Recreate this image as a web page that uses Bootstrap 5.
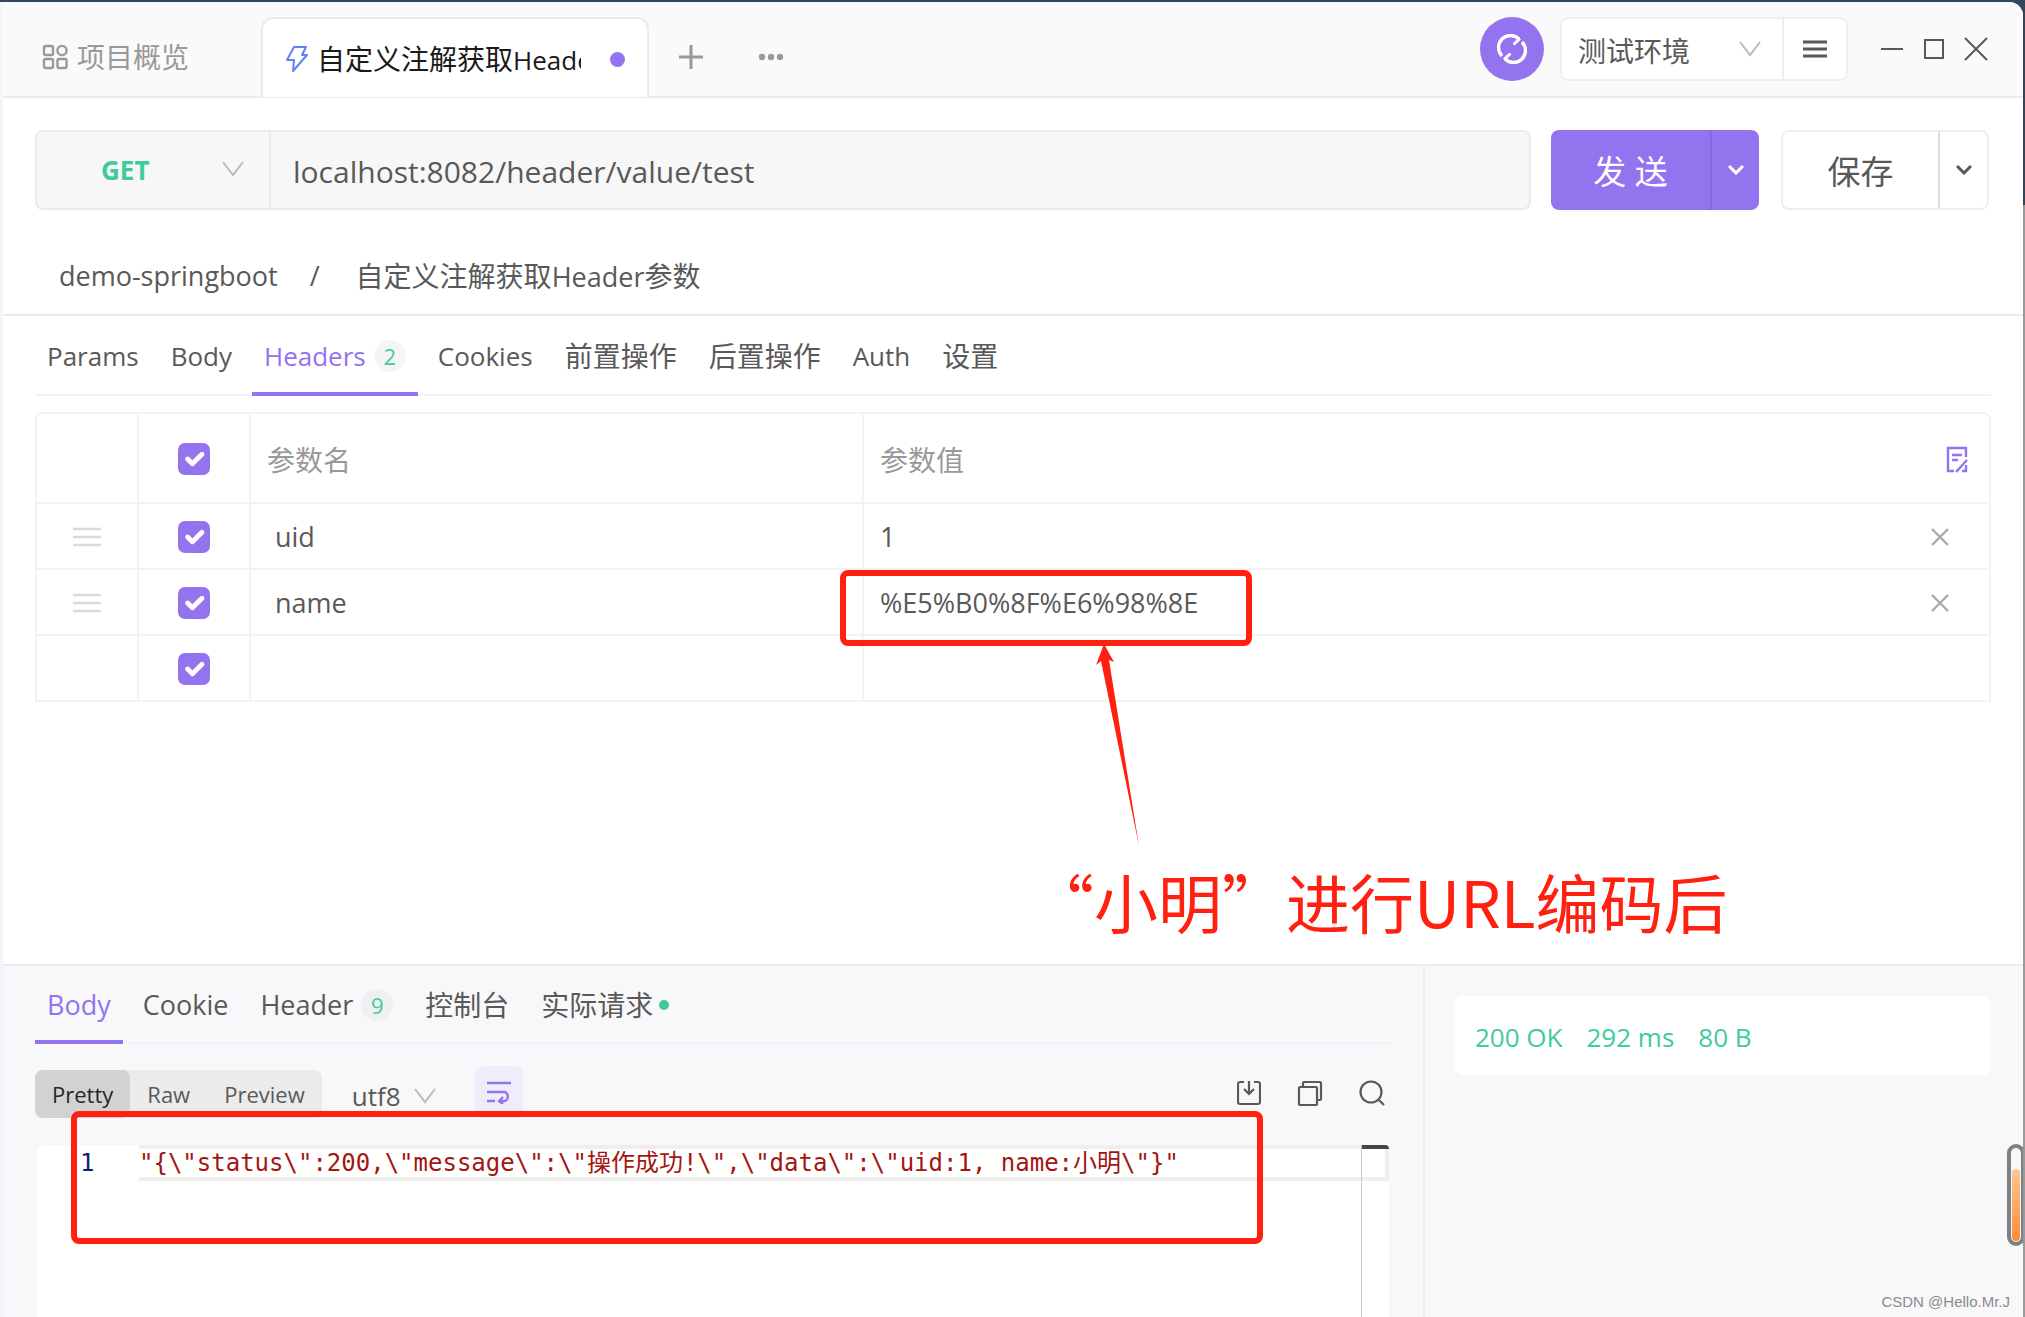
<!DOCTYPE html>
<html lang="zh-CN">
<head>
<meta charset="utf-8">
<meta name="viewport" content="width=device-width, initial-scale=1">
<title>自定义注解获取Header参数</title>
<link href="https://cdn.jsdelivr.net/npm/bootstrap@5.3.0/dist/css/bootstrap.min.css" rel="stylesheet">
<style>
:root{--violet:#9373ee;--mint:#3fcb9c;--ink:#595959;--line:#e8ebf0;--soft:#f3f3f5;--red:#ff2010}
body{font-family:"Open Sans","Noto Sans CJK SC",sans-serif;font-size:26px;line-height:36px;color:var(--ink);background:linear-gradient(#34465a 0 205px,#999 205px)}
button,input,select{font-family:inherit;color:inherit}
button{background:none;border:0;padding:0}
svg{display:block;flex:none;fill:none;stroke:currentColor}
.zh{font-size:28px}
.app-window{margin:2px 2px 0 0;min-height:calc(100vh - 2px);background:#fff;border-left:3px solid #f2f5f9;border-top-right-radius:14px;overflow:hidden;position:relative}
.title-bar{height:96px;background:#fafafa;border-bottom:2px solid var(--line);padding-right:35px}
.tab-strip{padding-top:16px;height:96px}
.overview-tab{width:258px;padding-left:39px;gap:9px;color:#999}
.open-tab{width:388px;height:80px;background:#fff;border:2px solid var(--line);border-bottom:0;border-radius:12px 12px 0 0;padding:2px 22px 0 22px;color:#1a1a1a}
.open-tab .tab-title{width:264px;margin-left:8px;overflow:hidden;white-space:nowrap}
.bolt-icon{color:#5b85ee}
.unsaved-dot{width:15px;height:15px;border-radius:50%;background:var(--violet)}
.sync-btn{width:64px;height:64px;border-radius:50%;background:var(--violet);color:#fff}
.boxed{border:2px solid #eee;border-radius:8px;background:#fff}
.env-box{height:64px;width:288px}
.pick{appearance:none;border:0;outline:0;background:url("data:image/svg+xml,%3Csvg xmlns='http://www.w3.org/2000/svg' width='22' height='16' fill='none' stroke='%23bbb' stroke-width='2'%3E%3Cpath d='M1 1l10 13L21 1'/%3E%3C/svg%3E") no-repeat}
.env-select{width:222px;padding-left:16px;padding-top:3px;font-size:28px;background-position:right 21px center;border-right:2px solid #eee}
.window-btns{gap:20px;margin-left:32px}
.request-bar{padding:32px 34px 0 32px}
.url-box{height:80px;background:#f7f7f7;border:2px solid var(--line);border-radius:8px;margin-right:20px}
.method-select{width:234px;padding-left:64px;font-weight:700;font-size:26px;color:var(--mint);background-position:right 25px top 29px;border-right:2px solid var(--line)}
.url-input{border:0;background:none;padding:3px 22px 0;font-size:30px;min-width:0;outline:0}
.split-btn{height:80px;width:208px;font-size:33px;border-radius:8px;overflow:hidden}
.split-btn>button:first-child{padding-top:4px}
.send-btn{background:var(--violet);color:#fff;margin-right:22px}
.send-btn .drop{border-left:2px solid #8868e0}
.save-btn .drop{border-left:2px solid #ddd}
.split-btn .drop{width:49px}
.crumbs{padding:28px 56px 0;height:106px;font-size:27px;border-bottom:2px solid var(--line)}
.crumbs a{color:inherit;text-decoration:none}
.crumb-slash{margin:0 36px 0 32px}
.tab-row{margin:0 32px;border-bottom:2px solid #f0f3f8;gap:8px;height:80px;flex-wrap:nowrap}
.tab-row .nav-link{padding:4px 12px 0;height:80px;color:var(--ink);border-bottom:4px solid transparent;display:flex;align-items:center;white-space:nowrap}
.tab-row .nav-link.active{color:var(--violet);border-color:var(--violet)}
.count-pill{width:32px;height:32px;line-height:32px;border-radius:50%;background:#f5f5f5;color:var(--mint);font-size:22px;text-align:center;margin-left:8px}
.param-grid{margin:16px 32px 0;border:2px solid var(--soft);border-radius:8px 8px 0 0}
.param-grid table{table-layout:fixed;width:100%;border-collapse:separate;border-spacing:0}
.param-grid td,.param-grid th{height:66px;padding:0;border-bottom:2px solid var(--soft);font-weight:400;position:relative}
.param-grid th{height:90px;color:#999;font-size:28px;padding:3px 0 0 16px}
.param-grid tr>:nth-child(-n+3){border-right:2px solid var(--soft)}
.param-grid tr>:nth-child(-n+2){padding:2px 0 0}
.param-grid tr:last-child td{height:64px;border-bottom:0}
.param-grid .form-check-input{width:32px;height:32px;margin:0;border:0;border-radius:7px;display:block;margin:auto}
.param-grid .form-check-input:checked{background-color:var(--violet)}
.cell-input{border:0;background:none;outline:0;width:80%;padding:2px 0 0 24px;font-size:27px}
.value-input{padding-left:16px}
.row-icon{color:#dadada;margin:auto}
.edit-btn{display:block;margin-left:38px;color:var(--violet)}
.delete-btn{display:block;margin:2px 0 0 40px;color:#aaa}
.ring{position:absolute;border:6px solid var(--red);border-radius:8px;pointer-events:none;z-index:2}
.value-ring{left:-24px;top:0;width:412px;height:76px}
.pointer{position:absolute;left:228px;top:74px;z-index:2}
.pointer path{fill:var(--red);stroke:none}
.note{font-family:"Noto Sans CJK SC",sans-serif;font-size:64px;line-height:80px;color:var(--red);padding:158px 0 24px;margin-left:calc(50% + 17px);white-space:nowrap}
.response{background:#f8f8fb;border-top:2px solid var(--line);height:353px}
.response-main{border-right:2px solid var(--line);min-width:0;position:relative}
.response-side{width:598px;padding:30px 32px 30px 30px}
.response .tab-row{height:78px;border-color:#eff3f7;gap:8px}
.response .tab-row .nav-link{height:78px;padding-top:3px}
.response .tab-row .latin{font-size:27px}
.response .count-pill{background:#f0f0f3}
.live-dot{width:10px;height:10px;border-radius:50%;background:var(--mint);margin-left:6px}
.view-bar{height:74px;padding:0 38px 0 32px}
.view-switch{background:#ebebeb;border-radius:8px;height:48px;font-size:22px}
.view-switch button{padding:0 17px;height:48px;border-radius:8px}
.view-switch .on{background:#d2d2d2;color:#262626}
.charset{width:86px;margin-left:30px;background-position:right 2px center;padding:0}
.wrap-btn{width:48px;height:52px;border-radius:8px;background:#f0edfa;color:var(--violet);margin-left:37px}
.tools{gap:36px}
.editor{margin:27px 34px 0 34px;height:172px;background:#fffffe;border-top-left-radius:8px;border-top-right-radius:8px;font-family:"DejaVu Sans Mono","Noto Sans CJK SC",monospace;font-size:24px;line-height:28px;overflow:hidden}
.line-no{width:102px;padding:4px 0 0 43px;color:#0b216f}
.code-line{border:4px solid #eee;border-left:0;height:36px;color:#a31515;white-space:pre}
.overview-ruler{position:absolute;right:34px;top:179px;width:28px;height:172px;border-left:1px solid #ccc;pointer-events:none}
.overview-ruler::before{content:"";display:block;height:4px;background:#444;border-top-right-radius:6px}
.body-ring{left:68px;top:145px;right:160px;height:133px}
.stat-card{background:#fff;border-radius:8px;height:79px;padding:2px 20px 0;gap:24px;color:var(--mint)}
.charge{position:absolute;right:-2px;bottom:71px;width:18px;height:102px;border:4px solid #808080;border-radius:9px;background:#f8f8fb;padding:21px 1px 1px}
.charge div{height:100%;border-radius:4px;background:linear-gradient(#ffc890,#ff8a3c)}
.credit{position:absolute;right:13px;bottom:5px;font-family:"Liberation Sans",sans-serif;font-size:15px;line-height:20px;color:#8a8a8a}
</style>
</head>
<body>
<div class="app-window">
  <header class="title-bar d-flex align-items-center">
    <div class="tab-strip d-flex align-items-center">
      <div class="overview-tab d-flex align-items-center">
        <svg width="26" height="26" stroke-width="2.400"><rect x="2" y="2" width="9" height="9" rx="1.500"/><circle cx="20" cy="6.500" r="4.600"/><rect x="2" y="15" width="9" height="9" rx="1.500"/><rect x="15.500" y="15" width="9" height="9" rx="1.500"/></svg>
        <span class="zh">项目概览</span>
      </div>
      <div class="open-tab d-flex align-items-center">
        <svg class="bolt-icon" width="24" height="28" stroke-width="2" stroke-linejoin="round"><path d="M9 2h12l-4 8h5L8 26l1-11H2z"/></svg>
        <div class="tab-title"><span class="zh">自定义注解获取</span>Header参数</div>
        <span class="unsaved-dot ms-auto"></span>
      </div>
      <button class="ms-4" aria-label="新建标签"><svg width="36" height="26" style="color:#999" stroke-width="3"><path d="M18 1v24M6 13h24"/></svg></button>
      <button class="ms-5" aria-label="更多"><svg width="28" height="8"><g fill="#999" stroke="none"><circle cx="5" cy="4" r="3.200"/><circle cx="14" cy="4" r="3.200"/><circle cx="23" cy="4" r="3.200"/></g></svg></button>
    </div>
    <button class="sync-btn ms-auto d-flex align-items-center justify-content-center" aria-label="同步"><svg width="30" height="30" stroke-width="3.400"><path d="M5 22A12 12 0 0 1 22 5M25 8A12 12 0 0 1 8 25"/><path d="M23 4.500l-6.500 6M7 25.500l6.500-6" stroke-width="3"/></svg></button>
    <div class="env-box boxed d-flex ms-3">
      <select class="pick env-select" aria-label="环境"><option>测试环境</option></select>
      <button class="flex-grow-1 d-flex align-items-center justify-content-center" aria-label="环境管理"><svg width="24" height="18" stroke-width="3"><path d="M0 2h24M0 9h24M0 16h24"/></svg></button>
    </div>
    <div class="window-btns d-flex align-items-center">
      <button aria-label="最小化"><svg width="24" height="24" stroke-width="2"><path d="M1 12h22"/></svg></button>
      <button aria-label="最大化"><svg width="20" height="20" stroke-width="2"><path d="M1 1h18v18H1z"/></svg></button>
      <button aria-label="关闭"><svg width="24" height="24" stroke-width="2"><path d="M1 1l22 22M23 1L1 23"/></svg></button>
    </div>
  </header>

  <main>
    <form class="request-bar d-flex">
      <div class="url-box d-flex flex-grow-1">
        <select class="pick method-select" aria-label="请求方法"><option>GET</option></select>
        <input class="url-input flex-grow-1" aria-label="请求地址" value="localhost:8082/header/value/test">
      </div>
      <div class="split-btn send-btn d-flex">
        <button type="button" class="flex-grow-1">发 送</button>
        <button type="button" class="drop d-flex align-items-center justify-content-center" aria-label="发送选项"><svg width="16" height="10" stroke-width="3"><path d="M1 1l7 7 7-7"/></svg></button>
      </div>
      <div class="split-btn save-btn boxed d-flex">
        <button type="button" class="flex-grow-1">保存</button>
        <button type="button" class="drop d-flex align-items-center justify-content-center" aria-label="保存选项"><svg width="16" height="10" stroke-width="3"><path d="M1 1l7 7 7-7"/></svg></button>
      </div>
    </form>

    <nav class="crumbs d-flex align-items-center" aria-label="路径">
      <a href="#">demo-springboot</a><span class="crumb-slash">/</span><a href="#"><span class="zh">自定义注解获取</span>Header<span class="zh">参数</span></a>
    </nav>

    <ul class="nav tab-row">
      <li><a class="nav-link" href="#">Params</a></li>
      <li><a class="nav-link" href="#">Body</a></li>
      <li><a class="nav-link active" href="#">Headers<span class="count-pill">2</span></a></li>
      <li><a class="nav-link" href="#">Cookies</a></li>
      <li><a class="nav-link zh" href="#">前置操作</a></li>
      <li><a class="nav-link zh" href="#">后置操作</a></li>
      <li><a class="nav-link" href="#">Auth</a></li>
      <li><a class="nav-link zh" href="#">设置</a></li>
    </ul>

    <div class="param-grid">
      <table>
        <colgroup><col style="width:102px"><col style="width:112px"><col style="width:31.4%"><col><col style="width:98px"></colgroup>
        <tr>
          <th></th>
          <th><input class="form-check-input" type="checkbox" checked aria-label="全选"></th>
          <th>参数名</th><th>参数值</th>
          <th><button class="edit-btn" aria-label="批量编辑"><svg width="24" height="28" stroke-width="2.400"><path d="M21 11V2H3v23h6M17 25h4v-6M11 26l11-12M7 9h10M7 14h6"/></svg></button></th>
        </tr>
        <tr>
          <td><svg class="row-icon" width="28" height="20" stroke-width="2.500"><path d="M0 2h28M0 10h28M0 18h28"/></svg></td>
          <td><input class="form-check-input" type="checkbox" checked aria-label="启用 uid"></td>
          <td><input class="cell-input" aria-label="参数名" value="uid"></td>
          <td><input class="cell-input value-input" aria-label="参数值" value="1"></td>
          <td><button class="delete-btn" aria-label="删除"><svg width="18" height="18" stroke-width="2.400"><path d="M1 1l16 16M17 1L1 17"/></svg></button></td>
        </tr>
        <tr>
          <td><svg class="row-icon" width="28" height="20" stroke-width="2.500"><path d="M0 2h28M0 10h28M0 18h28"/></svg></td>
          <td><input class="form-check-input" type="checkbox" checked aria-label="启用 name"></td>
          <td><input class="cell-input" aria-label="参数名" value="name"></td>
          <td><input class="cell-input value-input" aria-label="参数值" value="%E5%B0%8F%E6%98%8E">
            <div class="ring value-ring"></div>
            <svg class="pointer" width="60" height="204"><path d="M12 0L22 18 17 16 47 202 9 17 4 21z"/></svg>
          </td>
          <td><button class="delete-btn" aria-label="删除"><svg width="18" height="18" stroke-width="2.400"><path d="M1 1l16 16M17 1L1 17"/></svg></button></td>
        </tr>
        <tr>
          <td></td>
          <td><input class="form-check-input" type="checkbox" checked aria-label="启用新参数"></td>
          <td></td><td></td><td></td>
        </tr>
      </table>
    </div>
    <div class="note">“小明”进行URL编码后</div>
  </main>

  <section class="response d-flex">
    <div class="response-main flex-grow-1">
      <ul class="nav tab-row">
        <li><a class="nav-link latin active" href="#">Body</a></li>
        <li><a class="nav-link latin" href="#">Cookie</a></li>
        <li><a class="nav-link latin" href="#">Header<span class="count-pill">9</span></a></li>
        <li><a class="nav-link zh" href="#">控制台</a></li>
        <li><a class="nav-link zh" href="#">实际请求<span class="live-dot"></span></a></li>
      </ul>
      <div class="view-bar d-flex align-items-end">
        <div class="view-switch d-flex"><button class="on">Pretty</button><button>Raw</button><button>Preview</button></div>
        <select class="pick charset mb-1" aria-label="编码"><option>utf8</option></select>
        <button class="wrap-btn d-flex align-items-center justify-content-center" aria-label="自动换行"><svg width="24" height="24" stroke-width="2.400"><path d="M0 3h24M0 12h18a5 5 0 0 1 0 9h-5M0 21h8M16 17l-4 4 4 3"/></svg></button>
        <div class="tools d-flex ms-auto mb-2 pb-1">
          <button aria-label="下载"><svg width="24" height="26" stroke-width="2.200"><path d="M7 2H3Q1 2 1 4v18q0 2 2 2h18q2 0 2-2V4q0-2-2-2h-4M12 1v12M7 9l5 5 5-5"/></svg></button>
          <button aria-label="复制"><svg width="26" height="26" stroke-width="2.200"><rect x="2" y="7" width="18" height="18" rx="1"/><path d="M6 6V3q0-1 1-1h16q1 0 1 1v16q0 1-1 1h-2"/></svg></button>
          <button aria-label="搜索"><svg width="26" height="26" stroke-width="2.200"><circle cx="12" cy="12" r="10.500"/><path d="M19 19l6 6"/></svg></button>
        </div>
      </div>
      <div class="editor d-flex">
        <div class="line-no">1</div>
        <div class="code-line flex-grow-1">"{\"status\":200,\"message\":\"操作成功!\",\"data\":\"uid:1, name:小明\"}"</div>
      </div>
      <div class="overview-ruler"></div>
      <div class="ring body-ring"></div>
    </div>
    <aside class="response-side">
      <div class="stat-card d-flex align-items-center"><span>200 OK</span><span>292 ms</span><span>80 B</span></div>
    </aside>
  </section>
  <div class="charge"><div></div></div>
  <div class="credit">CSDN @Hello.Mr.J</div>
</div>
<script src="https://cdn.jsdelivr.net/npm/bootstrap@5.3.0/dist/js/bootstrap.bundle.min.js"></script>
</body>
</html>
